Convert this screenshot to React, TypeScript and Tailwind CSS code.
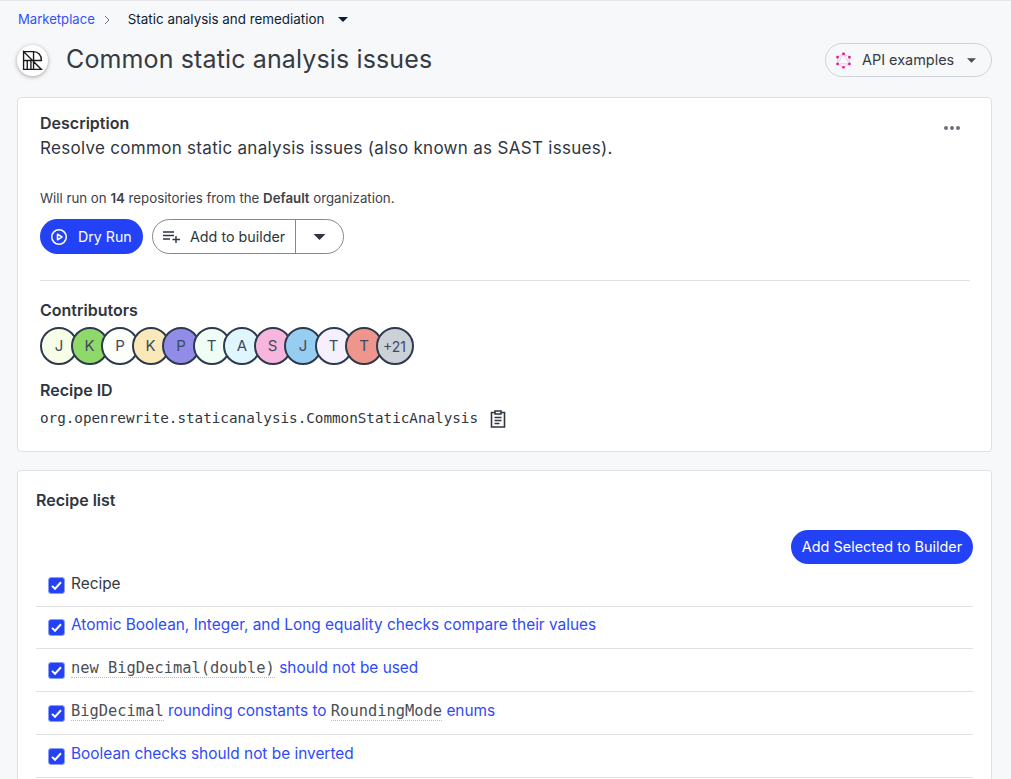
// App.tsx
import React from 'react';

const avatars: { label: string; bg: string }[] = [
    { label: 'J', bg: 'bg-[#f7fee7]' },
    { label: 'K', bg: 'bg-[#8fd86a]' },
    { label: 'P', bg: 'bg-[#fdfffa]' },
    { label: 'K', bg: 'bg-[#fae8b9]' },
    { label: 'P', bg: 'bg-[#918ce8]' },
    { label: 'T', bg: 'bg-[#effdf5]' },
    { label: 'A', bg: 'bg-[#e0f6fe]' },
    { label: 'S', bg: 'bg-[#f8b6de]' },
    { label: 'J', bg: 'bg-[#96cdf1]' },
    { label: 'T', bg: 'bg-[#f6f0fe]' },
    { label: 'T', bg: 'bg-[#f0958c]' },
];

const Caret: React.FC<{ className?: string }> = ({ className }) => (
    <svg viewBox="0 0 10 5" className={className} fill="currentColor">
        <path d="M0 0h10L5 5z" />
    </svg>
);

const Checkbox: React.FC = () => (
    <span className="flex-shrink-0 w-[17px] h-[17px] rounded-[3px] bg-[#2342f5] border border-[#8e9dfa] flex items-center justify-center">
        <svg viewBox="0 0 16 16" className="w-[13px] h-[13px]" fill="none" stroke="white" strokeWidth="2.4">
            <path d="M2.5 8.5l3.7 3.5 7.3-8" />
        </svg>
    </span>
);

const Logo: React.FC = () => (
    <div className="w-[31px] h-[31px] rounded-full bg-white shadow-[0_1px_4px_rgba(0,0,0,0.35)] flex items-center justify-center">
        <svg viewBox="0 0 20 20" className="w-[21px] h-[21px]" fill="none" stroke="#1a1a1a" strokeWidth="1.3">
            <path d="M1.500 1.500H11c4.500 0 7.500 3.500 7.500 8.500H1.500M1.500 1.500v17h17zM11 1.500V18.500M5 10v8.500M8.500 10v8.500" />
        </svg>
    </div>
);

const GraphqlIcon: React.FC = () => (
    <svg viewBox="0 0 20 20" className="w-[17px] h-[17px]" fill="none" stroke="#ee8fcf" strokeWidth="0.6">
        <path d="M10 2l7 4v8l-7 4-7-4V6zM10 2l7 12H3z" />
        <g fill="#dc1a9c" stroke="none">
            <rect x="8.500" y="0.500" width="3" height="3" rx="1" />
            <rect x="15.500" y="4.500" width="3" height="3" rx="1" />
            <rect x="15.500" y="12.500" width="3" height="3" rx="1" />
            <rect x="8.500" y="16.500" width="3" height="3" rx="1" />
            <rect x="1.500" y="12.500" width="3" height="3" rx="1" />
            <rect x="1.500" y="4.500" width="3" height="3" rx="1" />
        </g>
    </svg>
);

const Code: React.FC<{ children: React.ReactNode }> = ({ children }) => (
    <code className="font-['DejaVu_Sans_Mono',monospace] text-[15.4px] text-[#4a4f56] border-b border-dotted border-[#b9bcc2]">{children}</code>
);

const Row: React.FC<{ children: React.ReactNode }> = ({ children }) => (
    <div className="h-[43px] border-b border-[#dfe1e4] pl-[12px] flex items-center gap-[6px] text-[15.4px] text-[#2f4bf5]">
        <Checkbox />
        <div className="whitespace-pre mb-[4px]">{children}</div>
    </div>
);

export default function App() {
    return (
        <div className="h-screen overflow-hidden bg-[#f7f8fa] border-t border-[#e3e5e8] font-['Inter',sans-serif] text-[#2f3640] pl-[17px] pr-[19px]">
            <nav className="h-[37px] flex items-center text-[13.4px]">
                <a className="text-[#3352f7] text-[13.1px] ml-[1px]">Marketplace</a>
                <svg viewBox="0 0 10 10" className="w-[10px] h-[10px] ml-[7px] text-[#6b7280]" fill="none" stroke="currentColor" strokeWidth="1">
                    <path d="M3 1l4 4-4 4" />
                </svg>
                <span className="ml-[16px] text-[#0f1c33]">Static analysis and remediation</span>
                <Caret className="ml-[14px] w-[10px] h-[5px] text-[#0f1c33]" />
            </nav>

            <header className="h-[44px] flex items-center justify-between">
                <div className="flex items-center gap-[18px]">
                    <Logo />
                    <h1 className="text-[25px] tracking-[0.13px] font-normal text-[#363b42]">Common static analysis issues</h1>
                </div>
                <button className="h-[34px] w-[167px] rounded-full border border-[#cfd2d6] flex items-center pl-[9px] text-[14.45px] text-[#363b42]">
                    <GraphqlIcon />
                    <span className="ml-[10px]">API examples</span>
                    <Caret className="ml-[13px] w-[9px] h-[5px] text-[#4a4f56]" />
                </button>
            </header>

            <section className="mt-[15px] h-[355px] bg-white border border-[#dfe1e4] rounded-[4px] pl-[22px] pr-[21px] pt-[15px]">
                <div className="flex justify-between">
                    <div>
                        <h2 className="text-[16px] font-semibold leading-[20px]">Description</h2>
                        <p className="mt-[3px] text-[17px] leading-[24px] tracking-[0.3px]">Resolve common static analysis issues (also known as SAST issues).</p>
                    </div>
                    <div className="flex gap-[2px] mt-[13px] mr-[10px]">
                        <span className="w-[4px] h-[4px] rounded-full bg-[#6b7078]" />
                        <span className="w-[4px] h-[4px] rounded-full bg-[#6b7078]" />
                        <span className="w-[4px] h-[4px] rounded-full bg-[#6b7078]" />
                    </div>
                </div>
                <p className="mt-[28px] text-[13.27px] leading-[20px] text-[#3d4249]">
                    Will run on <b className="font-semibold">14</b> repositories from the <b className="font-semibold">Default</b> organization.
                </p>
                <div className="mt-[11px] flex gap-[9px]">
                    <button className="h-[35px] w-[103px] rounded-full bg-[#2342f5] text-white flex items-center pl-[10px] text-[14.2px]">
                        <svg viewBox="0 0 18 18" className="w-[18px] h-[18px]" fill="none" stroke="white" strokeWidth="1.500">
                            <circle cx="9" cy="9" r="7.250" />
                            <path d="M7.500 6.200L12 9l-4.500 2.800z" strokeLinejoin="round" />
                        </svg>
                        <span className="ml-[10px]">Dry Run</span>
                    </button>
                    <div className="h-[35px] w-[192px] rounded-full border border-[#85888d] flex items-center text-[14.3px] text-[#2f3640]">
                        <div className="flex items-center h-full w-[143px] border-r border-[#85888d] pl-[10px]">
                            <svg viewBox="0 0 18 14" className="w-[18px] h-[14px]" fill="none" stroke="#2f3640" strokeWidth="1.400">
                                <path d="M0 2h11M0 5.500h11M0 9h7M13 6v7M9.500 9.500h7.500" />
                            </svg>
                            <span className="ml-[9px]">Add to builder</span>
                        </div>
                        <Caret className="ml-[17px] w-[13px] h-[6px] text-[#2f3640]" />
                    </div>
                </div>
                <div className="mt-[26px] border-t border-[#dfe1e4]" />
                <h2 className="mt-[19px] text-[16px] font-semibold leading-[20px]">Contributors</h2>
                <div className="mt-[7px] flex">
                    {avatars.map((a, i) => (
                        <div key={i} className={`w-[38px] h-[38px] flex-shrink-0 rounded-full border-2 border-[#2d3a4e] ${a.bg} -mr-[7.500px] flex items-center justify-center text-[15px] text-[#3d4a5c]`}>{a.label}</div>
                    ))}
                    <div className="w-[38px] h-[38px] flex-shrink-0 rounded-full border-2 border-[#2d3a4e] bg-[#ccd1d8] flex items-center justify-center text-[14px] text-[#3d4a5c]">+21</div>
                </div>
                <h2 className="mt-[15px] text-[16px] font-semibold leading-[20px]">Recipe ID</h2>
                <div className="mt-[8px] flex items-center gap-[12px]">
                    <span className="font-['DejaVu_Sans_Mono',monospace] text-[14.27px] text-[#2f3640]">org.openrewrite.staticanalysis.CommonStaticAnalysis</span>
                    <svg viewBox="0 0 16 18" className="w-[16px] h-[18px]" fill="none" stroke="#2f3640" strokeWidth="1.600">
                        <path d="M5 2.500H1.500v14.500h13V2.500H11M5 1h6v3H5zM4.500 7.500h7M4.500 10.500h7M4.500 13.500h5" />
                    </svg>
                </div>
            </section>

            <section className="mt-[18px] bg-white border border-[#dfe1e4] rounded-[4px] px-[18px] pt-[19px] pb-[24px]">
                <h2 className="text-[16px] font-semibold leading-[20px]">Recipe list</h2>
                <div className="mt-[20px] flex justify-end">
                    <button className="h-[34px] w-[182px] rounded-full bg-[#2342f5] text-white text-[14.45px]">Add Selected to Builder</button>
                </div>
                <div className="h-[43px] border-b border-[#dfe1e4] pl-[12px] flex items-center gap-[6px] text-[15.4px] text-[#363b42]">
                    <Checkbox />
                    <span className="mb-[2px]">Recipe</span>
                </div>
                <div className="h-[42px] border-b border-[#dfe1e4] pl-[12px] flex items-center gap-[6px] text-[15.4px] text-[#2f4bf5]">
                    <Checkbox />
                    <div className="whitespace-pre mb-[5px]">Atomic Boolean, Integer, and Long equality checks compare their values</div>
                </div>
                <Row><Code>new BigDecimal(double)</Code> should not be used</Row>
                <Row><Code>BigDecimal</Code> rounding constants to <Code>RoundingMode</Code> enums</Row>
                <Row>Boolean checks should not be inverted</Row>
            </section>
        </div>
    );
}
